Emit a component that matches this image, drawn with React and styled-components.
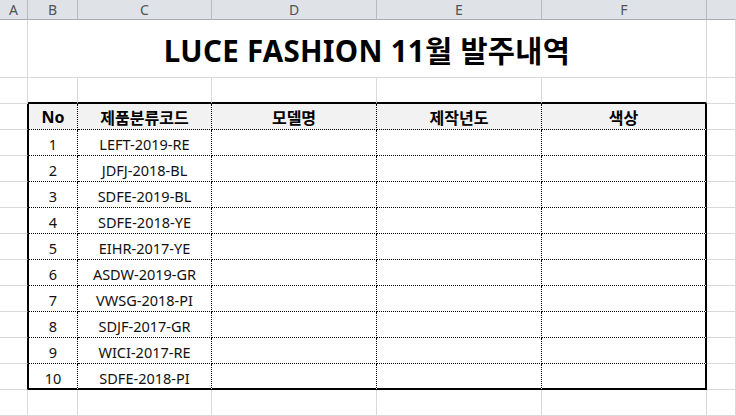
import React from "react";
import styled, { createGlobalStyle, css } from "styled-components";

const Global = createGlobalStyle`
  html, body { margin: 0; padding: 0; background: #fff; overflow: hidden; }
  body { font-family: "Noto Sans", "Noto Sans CJK KR", sans-serif; }
`;

const GRID = "#d9d9d9";

const Sheet = styled.div`
  display: grid;
  grid-template-columns: 28px 50px 134px 165px 165px 165px 1fr;
  width: 736px;
  height: 416px;
  overflow: hidden;
  grid-auto-rows: 26px;
  grid-template-rows: 20px 58px;
`;

const ColHead = styled.div`
  box-sizing: border-box;
  background: #dfe2e7;
  border-right: 1px solid ${(p) => (p.$last ? "transparent" : "#b8bcc1")};
  border-bottom: 1px solid #a8acb1;
  display: flex;
  align-items: center;
  justify-content: center;
  font-family: "Noto Sans", "Noto Sans CJK KR", sans-serif;
  font-size: 14px;
  color: #50535a;
  padding-bottom: 1px;
`;

const Cell = styled.div`
  box-sizing: border-box;
  border-right: 1px solid ${GRID};
  border-bottom: 1px solid ${GRID};
  ${(p) => p.$edgeLeft && css`border-right-color: #000;`}
`;

const TitleCell = styled.div`
  box-sizing: border-box;
  grid-column: 2 / 7;
  border-right: 1px solid ${GRID};
  border-bottom: 1px solid ${GRID};
  display: flex;
  align-items: center;
  justify-content: center;
  font-family: "Noto Sans", "Noto Sans CJK KR", sans-serif;
  font-weight: 700;
  font-size: 29.5px;
  color: #000;
  padding-top: 1px;
  letter-spacing: 0.3px;
`;

const AboveTable = styled.div`
  box-sizing: border-box;
  border-right: 1px solid ${GRID};
  border-bottom: 2px solid #000;
`;

const TCell = styled.div`
  box-sizing: border-box;
  display: flex;
  align-items: center;
  justify-content: center;
  padding-top: 3px;
  font-family: "Noto Sans", "Noto Sans CJK KR", sans-serif;
  font-size: 14.5px;
  color: #111;
  white-space: nowrap;
  border-right: 1px dotted #000;
  border-bottom: ${(p) => (p.$lastRow ? "2px solid #000" : "1px dotted #000")};
  ${(p) => p.$first && css`border-left: 1px solid #000;`}
  ${(p) => p.$lastCol && css`border-right: 2px solid #000;`}
  ${(p) =>
    p.$head &&
    css`
      background: #f2f2f2;
      font-weight: 700;
      font-size: 16px;
      color: #000;
      padding-top: 1px;
    `}
`;

const cols = ["A", "B", "C", "D", "E", "F", ""];
const heads = ["No", "제품분류코드", "모델명", "제작년도", "색상"];
const codes = [
  "LEFT-2019-RE",
  "JDFJ-2018-BL",
  "SDFE-2019-BL",
  "SDFE-2018-YE",
  "EIHR-2017-YE",
  "ASDW-2019-GR",
  "VWSG-2018-PI",
  "SDJF-2017-GR",
  "WICI-2017-RE",
  "SDFE-2018-PI",
];

export default function App() {
  return (
    <>
      <Global />
      <Sheet>
        {cols.map((c, i) => (
          <ColHead key={"h" + i} $last={i === cols.length - 1}>
            {c}
          </ColHead>
        ))}

        <Cell />
        <TitleCell>LUCE FASHION 11월 발주내역</TitleCell>
        <Cell />

        <Cell />
        {[0, 1, 2, 3, 4].map((i) => (
          <AboveTable key={"a" + i} />
        ))}
        <Cell />

        <Cell $edgeLeft />
        {heads.map((h, i) => (
          <TCell key={"th" + i} $head $first={i === 0} $lastCol={i === 4}>
            {h}
          </TCell>
        ))}
        <Cell />

        {codes.map((code, r) => {
          const last = r === codes.length - 1;
          return (
            <React.Fragment key={"r" + r}>
              <Cell $edgeLeft />
              <TCell $first $lastRow={last}>{r + 1}</TCell>
              <TCell $lastRow={last}>{code}</TCell>
              <TCell $lastRow={last} />
              <TCell $lastRow={last} />
              <TCell $lastRow={last} $lastCol />
              <Cell />
            </React.Fragment>
          );
        })}

        {cols.map((c, i) => (
          <Cell key={"b" + i} />
        ))}
      </Sheet>
    </>
  );
}
